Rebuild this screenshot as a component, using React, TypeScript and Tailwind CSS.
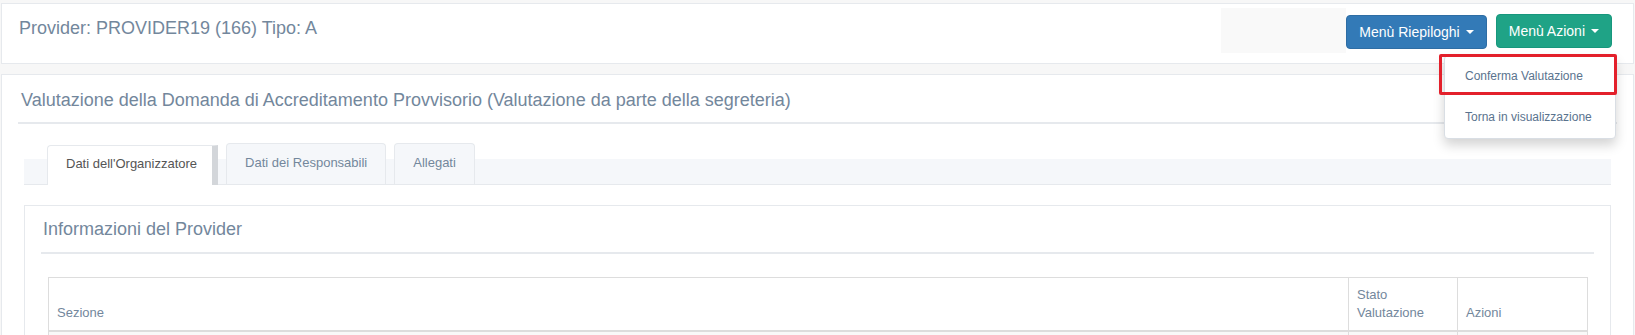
export default function App() {
  return (
    <div className="min-h-[335px] bg-[#F7F7F7] px-px pt-[3px] font-['Liberation_Sans',Arial,sans-serif] text-[13px] text-[#73879C]">
      {/* top bar */}
      <div className="flex h-[61px] items-start border border-[#E6E9ED] bg-white">
        <h1 className="pl-[17px] pt-[11px] text-[18px] leading-[26px] font-normal">Provider: PROVIDER19 (166) Tipo: A</h1>
        <div className="ml-auto flex items-start pr-[21px]">
          <div className="mt-[4px] h-[45px] w-[125px] bg-[#F9F9F9]" />
          <button className="mt-[11px] flex h-[34px] items-center rounded-[4px] border border-[#2E6DA4] bg-[#337AB7] px-[12px] text-[14px] leading-[20px] text-white">
            Menù Riepiloghi
            <span className="ml-[6px] h-0 w-0 border-x-[4px] border-t-[4px] border-x-transparent border-t-white" />
          </button>
          <div className="relative ml-[9px] mt-[10px]">
            <button className="flex h-[34px] items-center rounded-[4px] border border-[#17977D] bg-[#1FA386] px-[12px] text-[14px] leading-[20px] text-white">
              Menù Azioni
              <span className="ml-[6px] h-0 w-0 border-x-[4px] border-t-[4px] border-x-transparent border-t-white" />
            </button>
            <div className="absolute right-[-4px] top-full z-10 mt-[7px] w-[172px] rounded-[4px] border border-[#D9DEE4] bg-white shadow-[0_6px_12px_rgba(0,0,0,0.175)]">
              <div className="relative px-[20px] py-[12px] text-[12px] leading-[17px] text-[#5A738E]">
                Conferma Valutazione
                <div className="absolute left-[-6px] top-[-2px] h-[41px] w-[178px] rounded-[2px] border-[3px] border-[#E3202B]" />
              </div>
              <div className="px-[20px] py-[12px] text-[12px] leading-[17px] text-[#5A738E]">Torna in visualizzazione</div>
            </div>
          </div>
        </div>
      </div>

      {/* main panel */}
      <div className="mt-[10px] border border-[#E6E9ED] bg-white px-[16px]">
        <div className="border-b-2 border-[#E6E9ED] pb-[9px] pl-[3px] pt-[12px]">
          <h2 className="text-[18px] leading-[26px] font-normal">
            Valutazione della Domanda di Accreditamento Provvisorio (Valutazione da parte della segreteria)
          </h2>
        </div>

        <div className="mx-[6px]">
          <div className="mt-[35px] flex h-[26px] items-end border-b border-[#E6E9ED] bg-[#F5F7FA] pl-[23px]">
            <div className="-mb-px h-[40px] shrink-0 rounded-tl-[4px] border-l border-t border-r-[6px] border-[#E6E9ED] border-r-[#D3D6DA] bg-white pl-[18px] pr-[15px] pt-[9px] leading-[18px] text-[#555]">
              Dati dell'Organizzatore
            </div>
            <div className="ml-[8px] h-[41px] shrink-0 rounded-t-[4px] border border-b-0 border-[#E6E9ED] bg-[#F5F7FA] px-[18px] pt-[10px] leading-[18px]">
              Dati dei Responsabili
            </div>
            <div className="ml-[8px] h-[41px] shrink-0 rounded-t-[4px] border border-b-0 border-[#E6E9ED] bg-[#F5F7FA] px-[18px] pt-[10px] leading-[18px]">
              Allegati
            </div>
          </div>

          <div className="mt-[20px] border border-[#E6E9ED] px-[16px] pb-[20px]">
            <div className="border-b-2 border-[#E6E9ED] pb-[10px] pl-[2px] pt-[10px]">
              <h3 className="text-[18px] leading-[26px] font-normal">Informazioni del Provider</h3>
            </div>
            <div className="ml-[7px] mr-[6px] mt-[23px]">
              <table className="w-full border-collapse border border-[#DDDDDD]">
                <thead>
                  <tr>
                    <th className="border-b-2 border-[#DDDDDD] p-[8px] text-left align-bottom font-normal leading-[18px]">Sezione</th>
                    <th className="w-[109px] border-b-2 border-l border-[#DDDDDD] p-[8px] text-left align-bottom font-normal leading-[18px]">Stato Valutazione</th>
                    <th className="w-[130px] border-b-2 border-l border-[#DDDDDD] p-[8px] text-left align-bottom font-normal leading-[18px]">Azioni</th>
                  </tr>
                </thead>
                <tbody>
                  <tr className="bg-[#F9F9F9]">
                    <td className="h-[37px] p-[8px]" />
                    <td className="h-[37px] border-l border-[#DDDDDD] p-[8px]" />
                    <td className="h-[37px] border-l border-[#DDDDDD] p-[8px]" />
                  </tr>
                </tbody>
              </table>
            </div>
          </div>
        </div>
      </div>
    </div>
  );
}
